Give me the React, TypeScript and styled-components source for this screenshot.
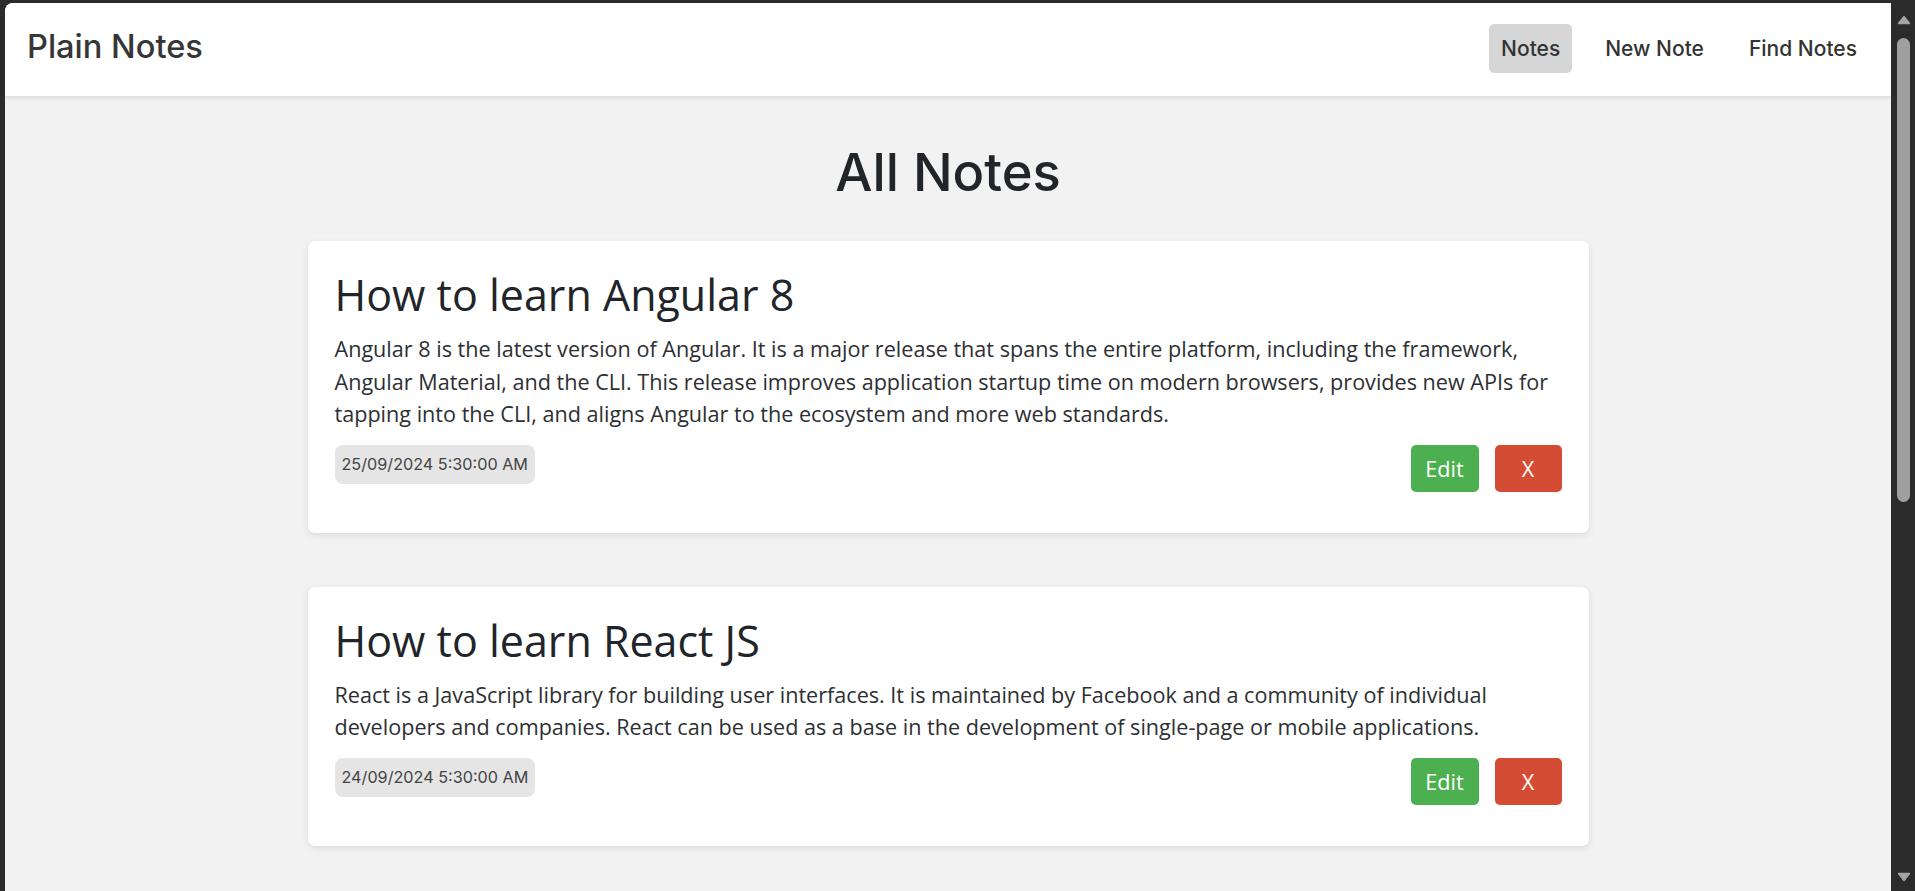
import React from "react";
import styled, { createGlobalStyle } from "styled-components";

const GlobalStyle = createGlobalStyle`
  html, body {
    margin: 0;
    padding: 0;
    height: 100%;
    background: #2b2b2b;
    overflow: hidden;
  }
  #root {
    height: 100%;
  }
  * {
    box-sizing: border-box;
  }
`;

const Frame = styled.div`
  display: flex;
  height: 100vh;
  background: #2b2b2b;
`;

const Viewport = styled.div`
  flex: 1;
  margin: 3px 0 0 5px;
  border-top-left-radius: 8px;
  overflow: hidden;
  background: #f2f2f2;
  display: flex;
  flex-direction: column;
`;

const Navbar = styled.header`
  height: 93px;
  flex-shrink: 0;
  background: #ffffff;
  box-shadow: 0 2px 4px rgba(0, 0, 0, 0.1);
  display: flex;
  align-items: flex-start;
  justify-content: space-between;
  padding: 0 22px 0 22px;
  position: relative;
  z-index: 1;
`;

const Brand = styled.div`
  margin-top: 23px;
  font-family: "Inter", sans-serif;
  font-weight: 500;
  font-size: 32.6px;
  line-height: 40px;
  color: #363636;
`;

const NavList = styled.nav`
  display: flex;
  gap: 21px;
  margin-top: 21px;
`;

const NavLink = styled.a<{ $active?: boolean }>`
  display: block;
  padding: 12px 12px;
  border-radius: 5px;
  font-family: "Inter", sans-serif;
  font-weight: 500;
  font-size: 21px;
  line-height: 25px;
  color: #333333;
  text-decoration: none;
  background: ${(p) => (p.$active ? "#d6d6d6" : "transparent")};
  cursor: pointer;
`;

const Main = styled.main`
  display: flex;
  flex-direction: column;
  align-items: center;
  padding-top: 44px;
`;

const PageTitle = styled.h1`
  margin: 0 0 37px;
  font-family: "Inter", sans-serif;
  font-weight: 500;
  font-size: 52.5px;
  line-height: 64px;
  color: #212529;
  text-align: center;
`;

const NoteList = styled.div`
  display: flex;
  flex-direction: column;
  gap: 54px;
  width: 1281px;
`;

const Card = styled.article`
  background: #ffffff;
  border-radius: 7px;
  box-shadow: 0 2px 7px rgba(0, 0, 0, 0.1);
  padding: 28px 27px 41px;
  font-family: "Open Sans", sans-serif;
`;

const NoteTitle = styled.h2`
  margin: 0 0 13px;
  font-weight: 400;
  font-size: 43px;
  line-height: 51px;
  color: #212529;
`;

const NoteBody = styled.p`
  margin: 0 0 14px;
  font-size: 21.6px;
  line-height: 32.5px;
  color: #2d2f33;
`;

const CardFooter = styled.div`
  display: flex;
  align-items: flex-start;
  justify-content: space-between;
`;

const DateBadge = styled.span`
  display: inline-block;
  padding: 10px 7px;
  border-radius: 8px;
  background: #e5e5e5;
  font-family: "Inter", sans-serif;
  font-weight: 400;
  font-size: 16.2px;
  line-height: 19px;
  color: #444444;
`;

const Actions = styled.div`
  display: flex;
  gap: 16px;
`;

const ActionButton = styled.button<{ $variant: "edit" | "delete" }>`
  width: ${(p) => (p.$variant === "edit" ? "68px" : "67px")};
  height: 47px;
  padding: 0;
  border: none;
  border-radius: 5px;
  background: ${(p) => (p.$variant === "edit" ? "#4caf50" : "#d44c33")};
  color: #ffffff;
  font-family: "Open Sans", sans-serif;
  font-size: 21.6px;
  line-height: 47px;
  cursor: pointer;
`;

const Scrollbar = styled.div`
  width: 24px;
  flex-shrink: 0;
  background: #2b2b2b;
  display: flex;
  flex-direction: column;
  align-items: center;
  padding: 15px 0 9px 1px;
`;

const Thumb = styled.div`
  width: 13px;
  height: 464px;
  margin-top: 13px;
  border-radius: 7px;
  background: #9f9f9f;
`;

const Spacer = styled.div`
  flex: 1;
`;

const Arrow = ({ down }: { down?: boolean }) => (
  <svg width="14" height="10" viewBox="0 0 14 10">
    <path
      d={down ? "M1.5 1.5 L12.5 1.5 L7 8.5 Z" : "M7 1.5 L12.5 8.5 L1.5 8.5 Z"}
      fill="#a3a3a3"
      stroke="#a3a3a3"
      strokeWidth="1.5"
      strokeLinejoin="round"
    />
  </svg>
);

const notes = [
  {
    title: "How to learn Angular 8",
    body:
      "Angular 8 is the latest version of Angular. It is a major release that spans the entire platform, including the framework, Angular Material, and the CLI. This release improves application startup time on modern browsers, provides new APIs for tapping into the CLI, and aligns Angular to the ecosystem and more web standards.",
    date: "25/09/2024 5:30:00 AM",
  },
  {
    title: "How to learn React JS",
    body:
      "React is a JavaScript library for building user interfaces. It is maintained by Facebook and a community of individual developers and companies. React can be used as a base in the development of single-page or mobile applications.",
    date: "24/09/2024 5:30:00 AM",
  },
];

export default function App() {
  return (
    <>
      <GlobalStyle />
      <Frame>
        <Viewport>
          <Navbar>
            <Brand>Plain Notes</Brand>
            <NavList>
              <NavLink $active>Notes</NavLink>
              <NavLink>New Note</NavLink>
              <NavLink>Find Notes</NavLink>
            </NavList>
          </Navbar>
          <Main>
            <PageTitle>All Notes</PageTitle>
            <NoteList>
              {notes.map((n) => (
                <Card key={n.title}>
                  <NoteTitle>{n.title}</NoteTitle>
                  <NoteBody>{n.body}</NoteBody>
                  <CardFooter>
                    <DateBadge>{n.date}</DateBadge>
                    <Actions>
                      <ActionButton $variant="edit">Edit</ActionButton>
                      <ActionButton $variant="delete">X</ActionButton>
                    </Actions>
                  </CardFooter>
                </Card>
              ))}
            </NoteList>
          </Main>
        </Viewport>
        <Scrollbar>
          <Arrow />
          <Thumb />
          <Spacer />
          <Arrow down />
        </Scrollbar>
      </Frame>
    </>
  );
}
